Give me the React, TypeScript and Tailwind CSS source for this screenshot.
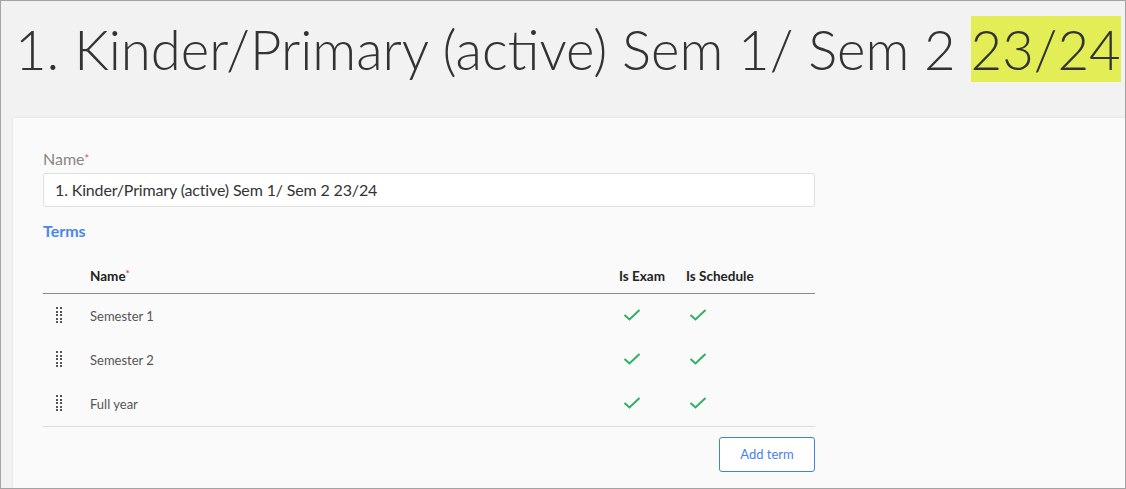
const terms = ["Semester 1", "Semester 2", "Full year"];

const DragHandle = () => (
  <div className="grid grid-cols-2 gap-x-[2px] gap-y-[1.5px] w-[6px]">
    {Array.from({ length: 10 }).map((_, i) => (
      <span key={i} className="w-[2px] h-[2px] bg-[#555]" />
    ))}
  </div>
);

const Tick = () => (
  <svg width="18" height="12" viewBox="0 0 18 12" fill="none">
    <path d="M1.5 6 L6.5 10.5 L16.5 1" stroke="#2fb063" strokeWidth="2" />
  </svg>
);

export default function App() {
  return (
    <div className="w-[1126px] h-[489px] border border-[#a3a3a3] bg-[#f2f2f2] overflow-hidden font-['Lato',sans-serif]">
      {/* Title */}
      <div className="h-[117px] pl-[14px] pt-[13px]">
        <h1 className="text-[54.5px] leading-[70px] font-light text-[#333] whitespace-nowrap">
          1. Kinder/Primary (active) Sem 1/ Sem 2{" "}
          <span className="bg-[#e3ee57]">23/24</span>
        </h1>
      </div>

      {/* Card */}
      <div className="ml-[12px] h-[400px] bg-[#fafafa] shadow-[0_0_4px_rgba(0,0,0,0.08)] px-[30px] pt-[30px]">
        <div className="w-[772px]">
          {/* Name field */}
          <label className="block h-[21px] leading-[22px] text-[16px] text-[#8a8580]">
            Name<span className="text-[#e5484d] text-[11px] align-top">*</span>
          </label>
          <div className="mt-[4px] h-[34px] bg-white border border-[#dedede] rounded-[3px] flex items-center px-[11px] text-[16px] tracking-[-0.15px] text-[#333]">
            1. Kinder/Primary (active) Sem 1/ Sem 2 23/24
          </div>

          {/* Terms */}
          <div className="mt-[14px] h-[20px] leading-[20px] text-[16px] font-bold text-[#4a86f0]">
            Terms
          </div>

          {/* Table */}
          <div className="mt-[17px]">
            <div className="h-[36px] pt-[2px] flex items-center border-b border-[#8a8a8a] text-[13.5px] font-bold text-[#222]">
              <div className="w-[47px]" />
              <div className="flex-1">
                Name<span className="text-[#e5484d] text-[10px] align-top">*</span>
              </div>
              <div className="w-[67px]">Is Exam</div>
              <div className="w-[129px]">Is Schedule</div>
            </div>
            {terms.map((t, i) => (
              <div
                key={t}
                className={`flex items-center pt-[2px] text-[13px] text-[#555] ${
                  i === terms.length - 1 ? "h-[45px] border-b border-[#dcdcdc]" : "h-[44px]"
                }`}
              >
                <div className="w-[47px] pl-[13px] pb-[4px]">
                  <DragHandle />
                </div>
                <div className="flex-1">{t}</div>
                <div className="w-[67px] pl-[4px] pb-[5px]">
                  <Tick />
                </div>
                <div className="w-[129px] pl-[3px] pb-[5px]">
                  <Tick />
                </div>
              </div>
            ))}
          </div>

          {/* Add term */}
          <div className="mt-[10px] flex justify-end">
            <button className="w-[96px] h-[35px] border border-[#3d82e6] rounded-[3px] bg-white text-[13px] text-[#4a7ff0]">
              Add term
            </button>
          </div>
        </div>
      </div>
    </div>
  );
}
